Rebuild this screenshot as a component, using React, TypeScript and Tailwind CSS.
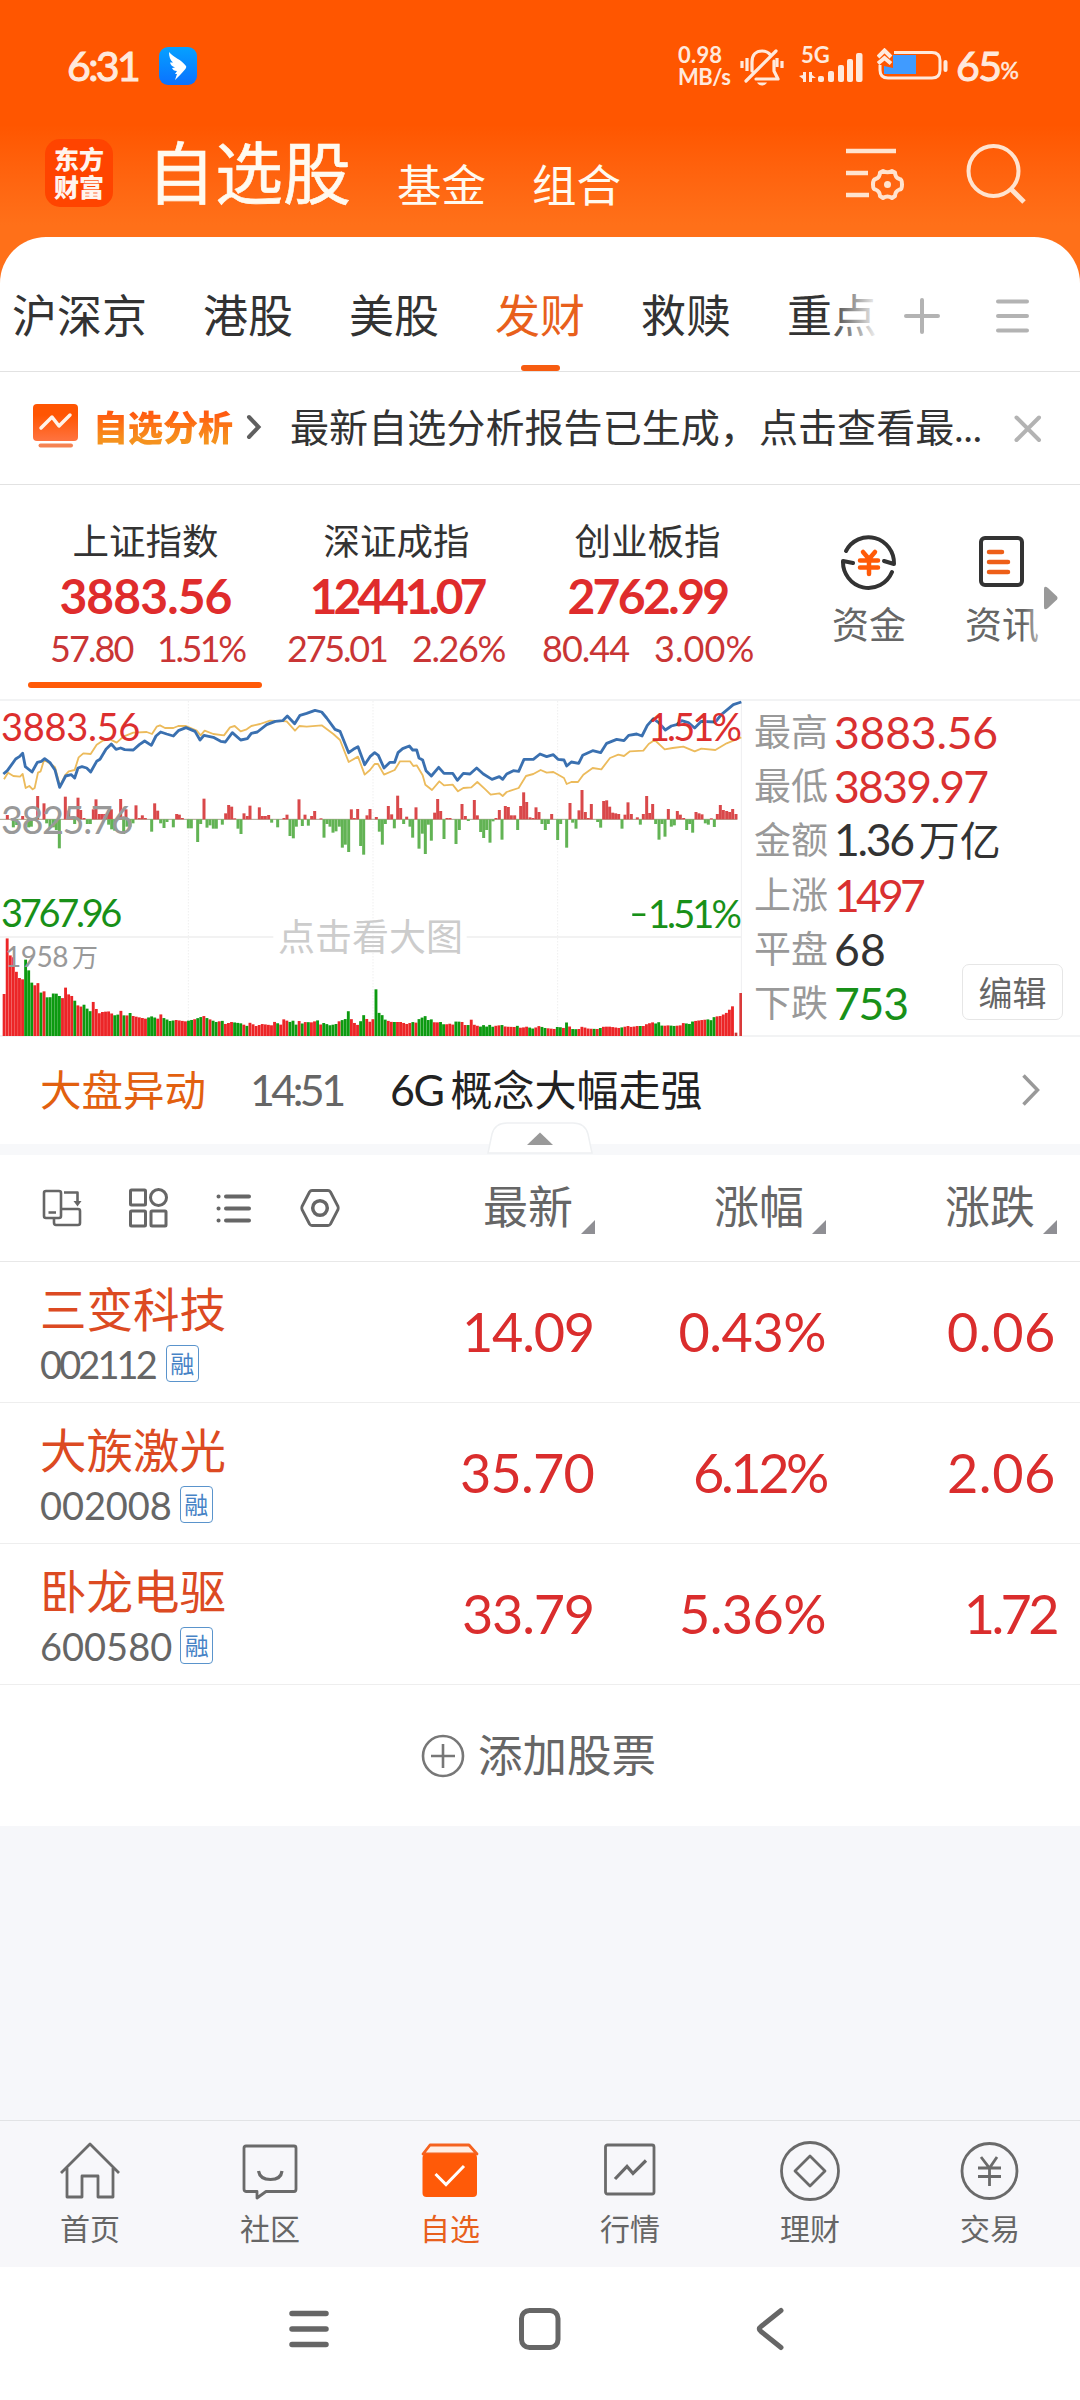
import type { ReactNode } from "react";

/* ---------- chart data (drawing units: a third of a pixel) ---------- */
const BLUE =
  "10,252 22,242 47,207 58,200 68,190 76,230 96,246 112,217 124,214 134,206 150,218 165,240 179,292 197,258 214,254 224,264 234,234 246,230 260,234 272,246 290,214 300,208 318,178 334,162 348,178 362,174 374,179 400,180 418,164 434,153 454,166 468,138 482,126 500,132 520,138 535,122 558,113 585,124 600,150 612,136 640,142 662,154 676,156 697,128 722,150 742,146 754,130 772,126 800,104 826,94 848,92 862,78 884,101 900,76 920,70 945,61 965,66 980,84 1005,118 1020,124 1046,188 1060,178 1074,170 1094,224 1110,200 1124,188 1135,196 1152,234 1170,217 1184,217 1194,188 1208,176 1228,168 1238,180 1250,180 1257,204 1268,210 1278,242 1294,258 1316,232 1332,250 1358,250 1372,271 1390,250 1410,252 1430,234 1450,252 1476,268 1498,260 1508,268 1520,252 1540,242 1556,244 1572,208 1600,208 1620,192 1640,200 1660,194 1674,208 1692,210 1700,228 1714,216 1736,220 1748,196 1778,182 1802,188 1820,160 1850,148 1872,152 1886,136 1910,132 1926,138 1942,106 1960,86 1976,98 1996,120 2014,108 2030,104 2045,92 2065,98 2084,114 2104,94 2146,96 2164,74 2200,44 2224,36";
const YELLOW =
  "12,268 24,248 40,258 60,260 68,252 77,294 88,288 98,298 104,294 114,248 122,244 132,210 150,220 165,232 180,288 195,256 206,244 224,240 236,202 250,190 272,192 290,164 308,152 330,148 350,158 370,140 400,128 440,126 456,132 470,110 480,106 495,114 520,114 535,108 558,108 590,122 602,136 614,122 640,132 672,136 690,112 704,108 722,124 740,118 754,108 780,102 810,92 860,94 885,122 898,108 920,110 965,106 1000,132 1020,150 1046,216 1074,200 1094,254 1110,240 1124,222 1134,222 1152,254 1184,240 1200,214 1230,214 1240,228 1250,226 1268,256 1276,284 1296,300 1318,274 1332,286 1358,284 1374,304 1390,294 1414,292 1432,276 1456,298 1472,314 1498,310 1508,318 1520,306 1556,294 1578,258 1600,252 1622,240 1640,248 1660,246 1692,264 1700,282 1714,276 1734,276 1750,254 1778,234 1804,238 1830,204 1855,194 1872,198 1890,184 1930,182 1946,162 1964,150 1994,178 2018,174 2050,170 2084,184 2104,176 2146,180 2180,160 2224,142";
const MID =
  "22,375 68,378 104,384 113,318 132,340 196,320 206,362 215,380 234,323 242,360 252,384 280,358 288,328 298,372 307,372 316,372 326,360 334,358 353,384 362,327 378,358 408,346 418,384 427,376 436,384 464,340 473,362 530,372 538,374 547,384 612,326 677,370 686,345 695,350 704,385 732,370 742,378 750,347 778,352 787,378 796,378 806,375 852,384 861,374 897,328 915,374 935,378 944,363 963,385 1054,358 1063,384 1073,357 1101,376 1110,357 1129,381 40,412 50,405 86,412 94,410 140,400 150,414 160,412 169,420 178,475 224,402 262,402 271,402 326,404 335,418 344,422 371,432 381,410 390,410 399,400 455,425 482,400 492,414 501,396 520,412 565,415 574,415 593,456 602,402 621,413 630,406 640,416 649,416 667,404 714,416 723,432 815,398 833,412 870,438 880,445 889,410 907,408 925,407 972,443 981,402 990,410 999,428 1008,424 1018,410 1027,473 1036,464 1046,486 1082,468 1091,494 1138,425 1147,464 1156,402 1165,348 1175,373 1183,415 1193,317 1202,354 1211,402 1220,380 1230,410 1238,443 1248,352 1257,476 1267,431 1276,492 1285,404 1294,452 1304,368 1313,327 1322,363 1332,447 1341,384 1350,384 1368,462 1378,420 1386,342 1396,378 1405,393 1423,330 1432,376 1442,426 1451,444 1460,420 1470,458 1479,394 1488,384 1498,360 1506,449 1516,348 1525,351 1534,376 1544,376 1553,420 1562,348 1571,307 1580,336 1590,382 1599,384 1608,352 1617,366 1626,402 1636,420 1645,402 1655,372 1673,450 1682,402 1700,473 1710,339 1718,398 1728,416 1737,361 1746,300 1756,366 1765,384 1774,342 1793,396 1802,413 1811,333 1820,331 1829,350 1838,368 1847,370 1856,372 1866,416 1875,374 1884,337 1894,372 1912,382 1921,404 1930,372 1940,318 1949,369 1958,342 1967,402 1977,449 1986,402 1995,440 2005,357 2014,410 2023,406 2032,363 2041,374 2051,384 2060,420 2069,402 2078,428 2088,366 2097,370 2106,373 2116,400 2125,404 2134,385 2143,411 2152,372 2161,345 2170,360 2180,363 2189,366 2198,357 2208,372";
const VOL_TOPS =
  "12,912 21,744 30,796 40,802 49,846 58,864 67,870 77,806 86,842 95,878 104,886 113,878 122,908 132,904 141,922 150,922 160,910 169,911 178,918 187,925 196,892 206,914 215,918 224,932 233,946 242,950 252,944 261,956 270,964 280,934 289,958 298,970 307,966 325,964 343,976 353,974 362,962 371,976 380,977 390,969 399,978 436,986 454,979 473,986 482,973 491,984 510,993 528,990 556,994 583,988 611,978 620,984 648,996 666,992 676,1002 694,996 722,1000 740,1008 750,998 768,1008 787,1002 815,1006 824,995 833,1000 842,1004 851,988 870,996 879,992 888,1004 897,993 907,1001 916,996 934,997 953,991 962,1004 971,999 990,1006 1008,1002 1018,993 1036,987 1046,960 1054,988 1064,1000 1073,1005 1082,993 1091,975 1100,987 1110,996 1119,987 1128,894 1137,970 1147,976 1156,990 1175,996 1202,996 1220,1002 1239,996 1248,998 1257,987 1276,978 1285,991 1294,988 1304,998 1322,996 1332,1004 1350,1001 1359,1004 1368,994 1386,996 1396,1006 1405,1005 1414,988 1423,1005 1442,1010 1451,1005 1460,1010 1470,1004 1479,1011 1488,1007 1507,1005 1516,1010 1544,1011 1553,1007 1562,1014 1580,1010 1599,1016 1617,1008 1635,1014 1663,1017 1673,1010 1691,1014 1700,996 1710,1012 1719,1018 1737,1017 1746,1010 1765,1016 1793,1017 1811,1010 1829,1010 1857,1014 1884,1008 1894,1011 1912,1008 1931,1008 1940,1002 1958,997 1968,1001 1977,996 1986,1008 2005,1006 2023,1008 2041,1006 2050,999 2069,1002 2078,994 2106,990 2125,988 2134,991 2143,980 2161,978 2180,968 2198,948";
const VOL_RUNS =
  "r7 g3 r2 g1 r1 g5 r4 g1 r2 g3 r7 g2 r1 g1 r1 g1 r5 g3 r2 g4 r4 g2 r1 g2 r1 g1 r1 g2 r1 g1 r3 g3 r1 g1 r9 g1 r3 g3 r1 g1 r1 g1 r2 g1 r1 g5 r1 g3 r3 g2 r3 g4 r2 g1 r5 g1 r1 g5 r2 g2 r3 g2 r2 g1 r3 g5 r2 g1 r4 g1 r3 g2 r2 g2 r3 g2 r1 g1 r1 g2 r5 g1 r1 g1 r6 g1 r5 g1 r4 g3 r2 g2 r3 g3 r4 g3 r6";

const parse = (s: string) => s.split(" ").map((p) => p.split(",").map(Number));
const mid = parse(MID);
const tops = parse(VOL_TOPS);
const colours = VOL_RUNS.split(" ").flatMap((r) => Array<string>(Number(r.slice(1))).fill(r[0]));

function topAt(x: number) {
  for (let i = 1; i < tops.length; i++) {
    const [x0, y0] = tops[i - 1];
    const [x1, y1] = tops[i];
    if (x <= x1) return y0 + ((y1 - y0) * Math.max(0, x - x0)) / (x1 - x0);
  }
  return tops[tops.length - 1][1];
}

function Chart() {
  return (
    <div className="relative h-[338px] w-[742px] shrink-0">
      <svg className="block h-[338px] w-[742px]" viewBox="0 27 2226 1014">
        <g stroke="#e6e6e6" strokeWidth="3" strokeDasharray="3 6">
          <path d="M565 34V1036M1119 34V1036M1673 34V1036" />
        </g>
        <path d="M0 741H820M1400 741H2226" stroke="#eeeeee" strokeWidth="5" />
        <path d="M2225 34V1038" stroke="#f0f0f2" strokeWidth="5" />
        <path d="M0 388H2212" stroke="#a8a08c" strokeWidth="3" />
        {mid.map(([x, y]) => (
          <rect
            key={`${x}-${y}`}
            x={x - 4.5}
            width="9"
            y={Math.min(y, 388)}
            height={Math.abs(y - 388)}
            fill={y < 388 ? "#d9484a" : "#62b354"}
          />
        ))}
        {colours.map((c, i) => {
          const x = 12 + i * 9.22;
          const y = topAt(x);
          return <rect key={i} x={x - 4} width="8.6" y={y} height={1038 - y} fill={c === "r" ? "#ec2527" : "#0c9a10"} />;
        })}
        <rect x="2204" y="1028" width="8" height="10" fill="#c33" />
        <rect x="2218" y="909" width="8" height="129" fill="#d93a3a" />
        <polyline points={YELLOW} fill="none" stroke="#ecbb5c" strokeWidth="5.5" strokeLinejoin="round" />
        <polyline points={BLUE} fill="none" stroke="#3a70b0" strokeWidth="8.5" strokeLinejoin="round" />
      </svg>
      <span className="absolute left-[1px] top-[7px] text-[38px] leading-[40px] tracking-[-0.3px] text-[#dc2e2e]">3883.56</span>
      <span className="absolute left-[1px] top-[100px] text-[38px] leading-[40px] tracking-[-1.5px] text-[#999]">3825.76</span>
      <span className="absolute left-[1px] top-[193px] text-[38px] leading-[40px] tracking-[-3.3px] text-[#189018]">3767.96</span>
      <span className="absolute left-[5px] top-[237px] text-[28px] leading-[40px] tracking-[-0.5px] text-[#999]">
        1958<span className="ml-[4px] text-[26px]">万</span>
      </span>
      <span className="absolute right-[3px] top-[7px] text-[38px] leading-[40px] tracking-[-2.9px] text-[#dc2e2e]">1.51%</span>
      <span className="absolute right-[3px] top-[193px] flex items-center text-[38px] leading-[40px] tracking-[-2.9px] text-[#189018]">
        <span className="mr-[1px] mt-px w-[17px] origin-left scale-x-80 tracking-normal">−</span>1.51%
      </span>
      <span className="absolute left-[278px] top-[218px] text-[37px] leading-[40px] text-[#ccc]">点击看大图</span>
    </div>
  );
}

function StatusBar() {
  return (
    <div className="flex h-[132px] items-center pl-[67px] text-[#ffe9dc]">
      <span className="w-[92px] text-[41px] leading-[40px] tracking-[-2.600px] [-webkit-text-stroke:1px]">6:31</span>
      <svg width="38" height="38" viewBox="0 0 38 38">
        <defs>
          <linearGradient id="ding" x1="0" y1="0" x2="0" y2="1">
            <stop offset="0" stopColor="#05a1ff" />
            <stop offset="1" stopColor="#0b71ff" />
          </linearGradient>
        </defs>
        <rect width="38" height="38" rx="9" fill="url(#ding)" />
        <path d="M10 5c5 6 12 7 17 14 .6 1 0 2-.6 3L22 27l-6 6 2-6h-2l2-3c-3 0-4-1-5-3l3-.5c-3-1-4.500-3-5-5l3 0c-3-2.500-4-6-4-10.500Z" fill="#fff" />
      </svg>
      <div className="ml-[481px] w-[62px] text-[22px] font-bold leading-[22px] tracking-[-0.5px]">
        <div className="tracking-[0.2px]">0.98</div>
        <div>MB/s</div>
      </div>
      <svg width="44" height="40" viewBox="0 0 44 40" fill="none" stroke="#ffe9dc" strokeWidth="3.200" className="mt-[2px]">
        <path d="M12 24V15C12 8 16 4 22 4c4 0 7 2 8.500 4M34 14v10l4 8H16M36 4 6 34" strokeLinecap="round" strokeLinejoin="round" />
        <path d="M2 14v7M7 11v13M37 11v9M42 14v7" />
        <path d="M17 35.500h10c-2 4-8 4-10 0Z" fill="#ffe9dc" stroke="none" />
      </svg>
      <div className="relative ml-[14px] h-[36px] w-[66px]">
        <span className="absolute left-[3px] top-[-5px] text-[22px] font-bold leading-[24px]">5G</span>
        <svg width="66" height="36" viewBox="0 0 66 36" fill="#ffe9dc" className="absolute left-0 top-0">
          <path d="M5 24h3v10H5l0-3-4-3 4-1ZM11 24h3l0 3 4 3-4 0v4h-3Z" />
          <rect x="20" y="28" width="6" height="6" rx="2" />
          <rect x="30" y="23" width="6" height="11" rx="2" />
          <rect x="40" y="17" width="6" height="17" rx="2" />
          <rect x="49" y="11" width="6" height="23" rx="2" />
          <rect x="58" y="5" width="6.500" height="29" rx="2" />
        </svg>
      </div>
      <svg width="74" height="36" viewBox="0 0 74 36" className="ml-[13px]">
        <path d="M17 4.500H55q8 0 8 8V22q0 8-8 8H11q-8 0-8-8V17" fill="none" stroke="#ffe9dc" strokeWidth="3" />
        <path d="M16 7H39V26H7V18L16 20Z" fill="#409bff" />
        <path d="M1 9 7.500 2.500 14 9M1 15.500 7.500 10 14 15.500" fill="none" stroke="#ffe9dc" strokeWidth="4" />
        <rect x="66.500" y="12" width="4" height="12" rx="2" fill="#ffe9dc" />
      </svg>
      <span className="ml-[5px] text-[41px] leading-[40px] tracking-[-1.500px] [-webkit-text-stroke:1px]">65</span>
      <span className="mt-[8px] text-[23px] leading-[24px] [-webkit-text-stroke:0.500px]">%</span>
    </div>
  );
}

function TitleBar() {
  return (
    <div className="flex h-[82px] items-center text-[#fffaf0]">
      <div className="ml-[45px] flex h-[68px] w-[68px] flex-col items-center justify-center rounded-[15px] bg-[#ff4400] text-[25px] font-black leading-[28.500px] text-[#fff4ee]">
        <span>东方</span>
        <span>财富</span>
      </div>
      <span className="ml-[34px] w-[204px] text-[68px] leading-[82px] [-webkit-text-stroke:0.600px]">自选股</span>
      <span className="ml-[46px] mt-[23px] w-[89px] text-[44.500px] leading-[50px]">基金</span>
      <span className="ml-[46px] mt-[23px] w-[89px] text-[44.500px] leading-[50px]">组合</span>
      <svg width="60" height="56" viewBox="0 0 60 56" fill="none" stroke="#ffe3cf" strokeWidth="4.500" className="ml-[224px]">
        <path d="M1 6H51M1 28H23M1 50H24" />
        <path
          strokeWidth="4"
          strokeLinejoin="round"
          d="M38 26q4.500 2.500 9 0l3 1.500q0 5 4.500 6.500 2.500 0 2.500 5.500t-2.500 5q-4.500 2-4.500 6.500l-3 2q-4.500-3-9 0l-3-2q0-4.500-4.500-6.500-2.500 0-2.500-5t2.500-5.500q4.500-1.500 4.500-6.500Z"
        />
        <circle cx="42.500" cy="39.500" r="3.500" fill="#ffe3cf" stroke="none" />
      </svg>
      <svg width="62" height="62" viewBox="0 0 62 62" fill="none" stroke="#ffe3cf" strokeWidth="4" className="ml-[60px]">
        <circle cx="28.500" cy="29" r="25" />
        <path d="M46 47 59 60" strokeWidth="5" />
      </svg>
    </div>
  );
}

function Tabs() {
  return (
    <div className="mt-[23px] flex h-[135px] rounded-t-[46px] border-b border-[#e2e2e2] bg-white text-[45px] leading-[50px] text-[#333]">
      <div className="relative flex w-[880px] gap-[56px] overflow-hidden whitespace-nowrap pl-[12px] pt-[54px]">
        <span>沪深京</span>
        <span>港股</span>
        <span>美股</span>
        <span className="relative text-[#e8601c]">
          发财
          <i className="absolute left-[26px] top-[74px] h-[6px] w-[39px] rounded-full bg-[#f75c10]" />
        </span>
        <span>救赎</span>
        <span>重点</span>
        <div className="absolute right-0 top-0 h-[130px] w-[52px] bg-linear-to-r from-white/0 to-white" />
      </div>
      <svg width="36" height="36" viewBox="0 0 36 36" stroke="#b3b3b3" strokeWidth="4" strokeLinecap="round" className="ml-[24px] mt-[61px]">
        <path d="M2 18H34M18 2V34" />
      </svg>
      <svg width="34" height="36" viewBox="0 0 34 36" stroke="#b3b3b3" strokeWidth="4" strokeLinecap="round" className="ml-[56px] mt-[61px]">
        <path d="M2 3.500H31M2 18H31M2 32.500H31" />
      </svg>
    </div>
  );
}

function AnalysisRow() {
  return (
    <div className="flex h-[113px] items-center border-b border-[#e2e2e2] pb-[2px] text-[#333]">
      <svg width="46" height="46" viewBox="0 0 46 46" className="ml-[33px]">
        <defs>
          <linearGradient id="an" x1="0" y1="0" x2="0" y2="1">
            <stop offset="0.3" stopColor="#ff5502" />
            <stop offset="1" stopColor="#ff7340" />
          </linearGradient>
        </defs>
        <rect y="0" width="45" height="37" rx="4" fill="url(#an)" />
        <path d="M8 24 19 13 26 22 37 11" fill="none" stroke="#fff3ea" strokeWidth="3.500" strokeLinecap="round" strokeLinejoin="round" />
        <path d="M7.500 41.500H38" stroke="#f58352" strokeWidth="4" strokeLinecap="round" />
      </svg>
      <span className="ml-[14px] w-[140px] bg-linear-to-b from-[#ff5a10] from-20% to-[#f5921e] to-80% bg-clip-text text-[35px] font-black leading-[44px] text-transparent">
        自选分析
      </span>
      <svg width="16" height="28" viewBox="0 0 16 28" fill="none" stroke="#5f5f5f" strokeWidth="4" strokeLinecap="round" className="ml-[13px]">
        <path d="M3 4 12.500 14 3 24" />
      </svg>
      <span className="ml-[28px] w-[700px] whitespace-nowrap text-[39.100px] leading-[50px]">最新自选分析报告已生成，点击查看最...</span>
      <svg width="28" height="28" viewBox="0 0 28 28" stroke="#b3b3b3" strokeWidth="4" strokeLinecap="round" className="ml-[24px] mt-[3px]">
        <path d="M2.500 2.500 25 25M25 2.500 2.500 25" />
      </svg>
    </div>
  );
}

const INDICES = [
  {
    name: "上证指数",
    value: "3883.56",
    valueCls: "tracking-[-0.900px]",
    diff: "57.80",
    diffCls: "ml-[30px] w-[107px] tracking-[-1.900px]",
    pct: "1.51%",
    pctCls: "tracking-[-2.500px]",
    active: true,
  },
  {
    name: "深证成指",
    value: "12441.07",
    valueCls: "tracking-[-4.100px]",
    diff: "275.01",
    diffCls: "ml-[16px] w-[125px] tracking-[-2.200px]",
    pct: "2.26%",
    pctCls: "tracking-[-1.400px]",
    active: false,
  },
  {
    name: "创业板指",
    value: "2762.99",
    valueCls: "tracking-[-2.600px]",
    diff: "80.44",
    diffCls: "ml-[20px] w-[112px] tracking-[-1px]",
    pct: "3.00%",
    pctCls: "tracking-[0.100px]",
    active: false,
  },
];

function Indices() {
  return (
    <div className="relative flex h-[214px] pl-[20px]">
      {INDICES.map((x) => (
        <div key={x.name} className="relative flex w-[251px] flex-col items-center whitespace-nowrap pt-[31px]">
          <span className="text-[36.500px] leading-[50px] text-[#333]">{x.name}</span>
          <span className={`mt-[4px] text-[48px] font-bold leading-[52px] text-[#df2c2c] ${x.valueCls}`}>{x.value}</span>
          <span className="flex self-stretch text-[36px] leading-[52px] text-[#c93535]">
            <span className={x.diffCls}>{x.diff}</span>
            <span className={x.pctCls}>{x.pct}</span>
          </span>
          {x.active && <i className="absolute left-[8px] top-[197px] h-[6px] w-[234px] rounded-full bg-[#ff5a08]" />}
        </div>
      ))}
      <div className="ml-[30px] flex w-[132px] flex-col items-center pt-[47px] text-[37px] leading-[50px] text-[#666]">
        <svg width="58" height="58" viewBox="0 0 58 58" fill="none" stroke="#333" strokeWidth="4" strokeLinejoin="round" strokeLinecap="round">
          <path d="M6 19A25.500 26 0 0 1 54 32L44 29" />
          <path d="M52 40A25.500 26 0 0 1 3 29L13 31" />
          <path d="M23 20 29 27 35 20M20 28.500H38M20 35.500H38M29 27V42" stroke="#ff5a08" strokeWidth="4.500" />
        </svg>
        <span className="mt-[10px]">资金</span>
      </div>
      <div className="flex w-[132px] flex-col items-center pt-[47px] text-[37px] leading-[50px] text-[#666]">
        <svg width="46" height="58" viewBox="0 0 46 58" fill="none" stroke="#333" strokeWidth="4" strokeLinecap="round">
          <rect x="3" y="6" width="41" height="47" rx="4" />
          <path d="M11 20H24M11 30H30M11 40H30" stroke="#ee5f18" strokeWidth="4.500" />
        </svg>
        <span className="ml-[2px] mt-[10px]">资讯</span>
      </div>
      <div className="absolute right-[36px] top-[120px] h-[44px] w-[20px] bg-linear-to-r from-white/0 to-white/70" />
      <svg width="14" height="24" viewBox="0 0 14 24" fill="#999" className="absolute left-[1044px] top-[101px]">
        <path d="M0 3Q0-1 4 2L13 10.500q1 1.500 0 3L4 22Q0 25 0 21Z" />
      </svg>
    </div>
  );
}

const STATS = [
  ["最高", "3883.56", "text-[#d93030] tracking-[-0.200px]"],
  ["最低", "3839.97", "text-[#d93030] tracking-[-1.700px]"],
  ["金额", "1.36", "text-[#333] tracking-[-2.300px]"],
  ["上涨", "1497", "text-[#d93030] tracking-[-3.800px]"],
  ["平盘", "68", "text-[#333] tracking-[0.300px]"],
  ["下跌", "753", "text-[#189018] tracking-[-1.200px]"],
];

function Market() {
  return (
    <div className="flex h-[338px] border-y-2 border-[#f2f3f4] bg-white">
      <div className="-mt-[2px]">
        <Chart />
      </div>
      <div className="relative pl-[12px] pt-[4px]">
        {STATS.map(([label, value, cls]) => (
          <div key={label} className="flex h-[54.200px] items-center whitespace-nowrap">
            <span className="w-[80px] text-[37px] leading-[54px] text-[#999]">{label}</span>
            <span className={`text-[44.500px] leading-[54px] ${cls}`}>
              {value}
              {label === "金额" && <span className="ml-[6px] text-[41px] tracking-normal">万亿</span>}
            </span>
          </div>
        ))}
        <span className="absolute left-[220px] top-[263px] flex h-[56px] w-[101px] items-center justify-center whitespace-nowrap rounded-[7px] border border-[#e6e6e6] bg-white text-[34px] text-[#666]">
          编辑
        </span>
      </div>
    </div>
  );
}

function AlertRow() {
  return (
    <div className="relative flex h-[118px] items-center whitespace-nowrap border-b-[11px] border-[#f7f8fa] text-[41.500px] leading-[50px]">
      <span className="-mt-[2px] ml-[40px] text-[#e2600f]">大盘异动</span>
      <span className="-mt-[2px] ml-[44px] w-[140px] text-[43px] tracking-[-3.600px] text-[#666]">14:51</span>
      <span className="-mt-[2px] text-[42px] text-[#222]">
        <span className="mr-[7px] text-[43px] tracking-[-1.500px]">6G</span>概念大幅走强
      </span>
      <svg width="20" height="34" viewBox="0 0 20 34" fill="none" stroke="#999" strokeWidth="3.500" className="absolute left-[1021px] top-[36px]">
        <path d="M2.500 2.500 16.500 17 2.500 31.500" />
      </svg>
      <svg width="106" height="34" viewBox="0 0 106 34" className="absolute left-[487px] top-[84px]">
        <path d="M1 32 5 13Q8 2 20 2H86Q98 2 101 13L105 32Z" fill="#fff" stroke="#eef0f2" strokeWidth="1.500" />
        <path d="M40 24 53 11.500 66 24Z" fill="#999" />
      </svg>
    </div>
  );
}

function SortLabel({ children, width }: { children: ReactNode; width: string }) {
  return (
    <div className={`flex justify-end ${width}`}>
      <span className="text-[45px] leading-[50px]">{children}</span>
      <svg width="14" height="14" viewBox="0 0 14 14" className="ml-[8px] mt-[38px]">
        <path d="M14 0V14H0Z" fill="#8f8f94" />
      </svg>
    </div>
  );
}

function TableHead() {
  return (
    <div className="flex h-[107px] items-center border-b border-[#e8e8e8] text-[#666]">
      <div className="flex w-[364px] gap-[46px] pl-[42px]">
        <svg width="40" height="40" viewBox="0 0 40 40" fill="none" stroke="#666" strokeWidth="2.600" strokeLinejoin="round">
          <path d="M12 30H4Q2 30 2 28V5Q2 3 4 3H17Q19 3 19 5V28Q19 30 17 30H12V34.500Q12 37 14 37H36Q38 37 38 35V23Q38 21 36 21H19M6.500 24.500H14M22 4.500H35.500V15" />
          <path d="M31.500 13H39.500L35.500 18.500Z" fill="#666" stroke="none" />
        </svg>
        <svg width="40" height="40" viewBox="0 0 40 40" fill="none" stroke="#666" strokeWidth="3">
          <rect x="2.500" y="2" width="15" height="15" rx="1" />
          <circle cx="30.500" cy="9.500" r="8" />
          <rect x="2.500" y="23" width="15" height="15" rx="1" />
          <rect x="23" y="23" width="15" height="15" rx="1" />
        </svg>
        <svg width="40" height="40" viewBox="0 0 40 40" fill="none" stroke="#666" strokeWidth="4" strokeLinecap="round">
          <path d="M12 8.500H35M12 20.500H35M12 32.500H35M4.500 8.500h.1M4.500 20.500h.1M4.500 32.500h.1" />
        </svg>
        <svg width="40" height="40" viewBox="0 0 40 40" fill="none" stroke="#666" strokeWidth="2.800" strokeLinejoin="round">
          <path d="M12 2.500H28Q29.500 2.500 30.500 4L38 18.500Q38.500 20 38 21.500L30.500 36Q29.500 37.500 28 37.500H12Q10.500 37.500 9.500 36L2 21.500Q1.500 20 2 18.500L9.500 4Q10.500 2.500 12 2.500Z" />
          <circle cx="20" cy="20" r="7.300" strokeWidth="3.500" />
        </svg>
      </div>
      <SortLabel width="w-[231px]">最新</SortLabel>
      <SortLabel width="w-[231px]">涨幅</SortLabel>
      <SortLabel width="w-[231px]">涨跌</SortLabel>
    </div>
  );
}

const STOCKS = [
  {
    name: "三变科技",
    code: "002112",
    codeCls: "tracking-[-2.900px] mr-[3px]",
    price: ["14.09", "tracking-[-1.200px]"],
    pct: ["0.43%", "tracking-[-0.500px]"],
    diff: ["0.06", "tracking-[0.600px]"],
  },
  {
    name: "大族激光",
    code: "002008",
    codeCls: "tracking-[-0.100px]",
    price: ["35.70", "tracking-[-0.800px]"],
    pct: ["6.12%", "tracking-[-3.400px]"],
    diff: ["2.06", "tracking-[0.600px]"],
  },
  {
    name: "卧龙电驱",
    code: "600580",
    codeCls: "tracking-[0px]",
    price: ["33.79", "tracking-[-1.200px]"],
    pct: ["5.36%", "tracking-[-0.600px]"],
    diff: ["1.72", "tracking-[-3.600px]"],
  },
];

function Stocks() {
  return (
    <>
      {STOCKS.map((s) => (
        <div key={s.code} className="flex h-[141px] items-center border-b border-[#eeeeee] text-[54px] leading-[60px] text-[#da2d2d]">
          <div className="w-[364px] pl-[40px]">
            <div className="mt-[2px] text-[46.500px] leading-[56px] text-[#dc4a22]">{s.name}</div>
            <div className="mt-[5px] flex items-center gap-[8px] text-[38px] leading-[44px] text-[#666]">
              <span className={s.codeCls}>{s.code}</span>
              <span className="flex h-[37px] w-[33px] items-center justify-center rounded-[4px] border-[1.500px] border-[#5a94cc] text-[24px] leading-[34px] text-[#4783c6]">融</span>
            </div>
          </div>
          <span className={`w-[230px] text-right ${s.price[1]}`}>{s.price[0]}</span>
          <span className={`w-[232px] text-right ${s.pct[1]}`}>{s.pct[0]}</span>
          <span className={`w-[230px] text-right ${s.diff[1]}`}>{s.diff[0]}</span>
        </div>
      ))}
    </>
  );
}

function TabItem({ label, active, children }: { label: string; active?: boolean; children: ReactNode }) {
  return (
    <div className={`flex w-[180px] flex-col items-center pt-[20px] ${active ? "text-[#e8601c]" : "text-[#666]"}`}>
      <svg width="60" height="60" viewBox="0 0 60 60" fill="none" stroke="#6a6a6a" strokeWidth="2.800">
        {children}
      </svg>
      <span className="mt-[7px] text-[30px] leading-[40px]">{label}</span>
    </div>
  );
}

function TabBar() {
  return (
    <div className="flex h-[147px] border-t border-[#e2e3e5] bg-[#f7f7fa]">
      <TabItem label="首页">
        <path d="M1 32 30 3 59 32M7 27V56H22V35H38V56H53V27" strokeLinejoin="round" />
      </TabItem>
      <TabItem label="社区">
        <path d="M6 5H54Q56 5 56 7V48Q56 50.500 54 50.500H26L17 57V50.500H6Q4 50.500 4 48V7Q4 5 6 5Z" strokeLinejoin="round" />
        <path d="M18.500 30Q20 38.500 30.500 38.500T42 30" strokeWidth="3.200" />
      </TabItem>
      <TabItem label="自选" active>
        <path d="M3 13 10 4H49L57 13Z" fill="#ffeee4" stroke="#f5621e" strokeLinejoin="round" />
        <rect x="2.500" y="13" width="54.500" height="43" rx="4" fill="#ff5a08" stroke="none" />
        <path d="M15.500 33 26 43.500 44 25" stroke="#fff" strokeWidth="3" />
      </TabItem>
      <TabItem label="行情">
        <rect x="5.500" y="4" width="48.500" height="49" rx="2" />
        <path d="M15 38 27 25.500 33 32.500 46 19.500" strokeWidth="3.200" />
      </TabItem>
      <TabItem label="理财">
        <circle cx="30" cy="30" r="28.500" />
        <path d="M30 15 45 30 30 45 15 30Z" strokeLinejoin="round" />
      </TabItem>
      <TabItem label="交易">
        <circle cx="29.500" cy="30" r="27.500" />
        <path d="M21 16 29.500 27 37 16M18 27H41M18 35.500H41M29.500 27V45" />
      </TabItem>
    </div>
  );
}

export default function App() {
  return (
    <div className="flex h-[2400px] w-[1080px] flex-col overflow-hidden bg-white font-['Lato','Noto_Sans_CJK_SC',sans-serif]">
      <div className="bg-linear-to-b from-[#ff5600] from-[125px] to-[#ff7019] to-[225px]">
        <StatusBar />
        <TitleBar />
        <Tabs />
      </div>
      <AnalysisRow />
      <Indices />
      <Market />
      <AlertRow />
      <TableHead />
      <Stocks />
      <div className="flex h-[141px] items-center pl-[421px] text-[44.500px] leading-[50px] text-[#666]">
        <svg width="44" height="44" viewBox="0 0 44 44" fill="none" stroke="#777" strokeWidth="2.600">
          <circle cx="22" cy="22" r="20" />
          <path d="M10 22H34M22 10V34" />
        </svg>
        <span className="-mt-[2px] ml-[13px]">添加股票</span>
      </div>
      <div className="flex-1 bg-[#f6f7fa]" />
      <TabBar />
      <div className="flex h-[133px] pt-[40px]">
        <svg width="42" height="44" viewBox="0 0 42 44" stroke="#666" strokeWidth="5.500" strokeLinecap="round" className="ml-[288px]">
          <path d="M4 6.500H38M4 22H38M4 37.500H38" />
        </svg>
        <svg width="42" height="44" viewBox="0 0 42 44" fill="none" stroke="#666" strokeWidth="5" className="ml-[189px]">
          <rect x="2.500" y="3.500" width="36.500" height="37" rx="8" />
        </svg>
        <svg width="30" height="44" viewBox="0 0 30 44" fill="none" stroke="#666" strokeWidth="5" strokeLinecap="round" className="ml-[194px]">
          <path d="M26 3.500 6 19.500Q2.500 22 6 24.500L26 40.500" />
        </svg>
      </div>
    </div>
  );
}
